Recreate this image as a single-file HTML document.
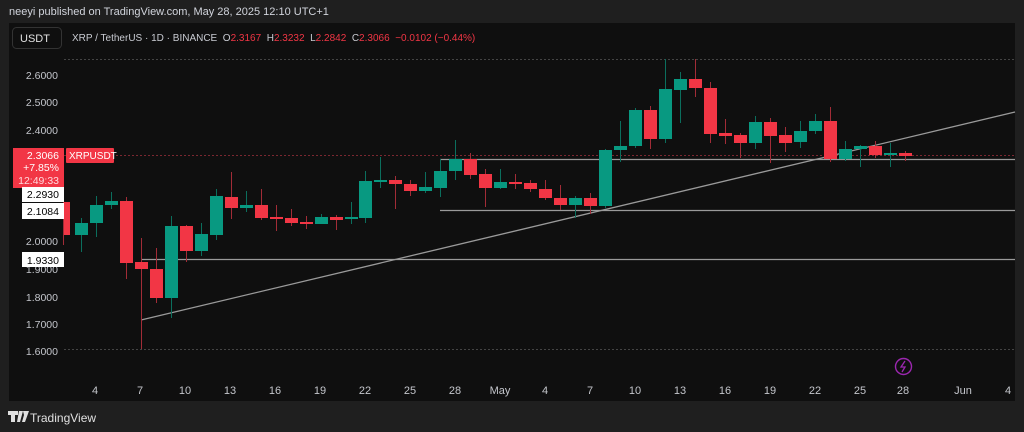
<!DOCTYPE html><html><head><style>
body{margin:0;width:1024px;height:432px;background:#1f1f1f;overflow:hidden;font-family:"Liberation Sans",sans-serif;position:relative}
.t{position:absolute;white-space:nowrap}
</style></head><body>
<div class="t" style="left:9px;top:6px;font-size:11px;color:#d1d4dc">neeyi published on TradingView.com, May 28, 2025 12:10 UTC+1</div>
<svg style="position:absolute;left:0;top:0" width="1024" height="432" font-family="Liberation Sans, sans-serif">
<rect x="9" y="23" width="1006" height="378" fill="#0f0f0f"/>
<g stroke="#444" stroke-dasharray="2,2" stroke-width="1"><line x1="64" y1="59.5" x2="1015" y2="59.5"/><line x1="64" y1="349.5" x2="1015" y2="349.5"/></g>
<line x1="64" y1="155.5" x2="1015" y2="155.5" stroke="#7a2730" stroke-dasharray="2,2"/>
<g stroke="#9a9a9a" stroke-width="1.3"><line x1="440" y1="159.5" x2="1015" y2="159.5"/><line x1="440" y1="210.5" x2="1015" y2="210.5"/><line x1="141" y1="259.5" x2="1015" y2="259.5"/><line x1="141" y1="320" x2="1015" y2="112"/></g>
<g id="c"></g>
<rect x="12.5" y="27.5" width="49" height="21" rx="4" fill="#0f0f0f" stroke="#333"/>
<text x="20" y="42" font-size="11" fill="#e0e0e0">USDT</text>
<text x="72" y="41" font-size="10" fill="#c9cbd2" style="white-space:pre">XRP / TetherUS · 1D · BINANCE  O<tspan fill="#f23645">2.3167</tspan>  H<tspan fill="#f23645">2.3232</tspan>  L<tspan fill="#f23645">2.2842</tspan>  C<tspan fill="#f23645">2.3066</tspan>  <tspan fill="#f23645">−0.0102 (−0.44%)</tspan></text>
<g font-size="10.5" fill="#c4c6cc" text-anchor="end">
<text x="58" y="79">2.6000</text><text x="58" y="106">2.5000</text><text x="58" y="134">2.4000</text><text x="58" y="245">2.0000</text><text x="58" y="273">1.9000</text><text x="58" y="301">1.8000</text><text x="58" y="328">1.7000</text><text x="58" y="355">1.6000</text></g>
<rect x="13" y="148" width="51" height="40" fill="#f23645"/>
<g font-size="10.5" fill="#fff" text-anchor="end"><text x="59" y="159">2.3066</text><text x="59" y="171">+7.85%</text><text x="59" y="184" fill="#ffd8dc">12:49:33</text></g>
<rect x="66" y="148" width="48" height="15" rx="1" fill="#f23645"/><text x="69" y="159" font-size="10" fill="#fff">XRPUSDT</text>
<g fill="#fff"><rect x="22" y="187" width="42" height="15"/><rect x="22" y="203" width="42" height="16"/><rect x="22" y="252" width="42" height="15"/></g>
<g font-size="10.5" fill="#000" text-anchor="end"><text x="59" y="198">2.2930</text><text x="59" y="215">2.1084</text><text x="59" y="264">1.9330</text></g>
<g font-size="11" fill="#c4c6cc" text-anchor="middle">
<text x="95" y="394">4</text><text x="140" y="394">7</text><text x="185" y="394">10</text><text x="230" y="394">13</text><text x="275" y="394">16</text><text x="320" y="394">19</text><text x="365" y="394">22</text><text x="410" y="394">25</text><text x="455" y="394">28</text><text x="500" y="394">May</text><text x="545" y="394">4</text><text x="590" y="394">7</text><text x="635" y="394">10</text><text x="680" y="394">13</text><text x="725" y="394">16</text><text x="770" y="394">19</text><text x="815" y="394">22</text><text x="860" y="394">25</text><text x="903" y="394">28</text><text x="963" y="394">Jun</text><text x="1008" y="394">4</text></g>
<circle cx="903.5" cy="366.5" r="8" fill="none" stroke="#9c27b0" stroke-width="1.4"/>
<path d="M905 361 L901 367 L905 367 L902 372" fill="none" stroke="#9c27b0" stroke-width="1.3"/>
<path d="M8 411h10v4h-3v7h-4v-7h-3z M19 411h4l-3 11h-3z M23 411h6l-4 11h-3l2-7z" fill="#e0e0e0"/>
<text x="30" y="422" font-size="12" fill="#e0e0e0">TradingView</text>
</svg>
<script>
var d=[[63,202,235,176,245,'r'],[81,223,235,218,252,'g'],[96,205,223,196,237,'g'],[111,201,205,192,209,'g'],[126,201,263,197,279,'r'],[141,262,269,238,349,'r'],[156,269,298,248,303,'r'],[171,226,298,216,318,'g'],[186,226,251,225,262,'r'],[201,234,251,223,256,'g'],[216,196,235,189,240,'g'],[231,197,208,172,219,'r'],[246,205,208,191,212,'g'],[261,205,218,189,220,'r'],[276,217,218,205,231,'r'],[291,218,223,209,226,'r'],[306,222,224,216,229,'r'],[321,217,224,214,224,'g'],[336,217,220,215,230,'r'],[351,217,219,202,224,'g'],[365,181,218,171,223,'g'],[380,180,182,157,188,'g'],[395,180,184,176,209,'r'],[410,184,191,180,196,'r'],[425,187,191,172,193,'g'],[440,171,188,159,197,'g'],[455,159,171,140,180,'g'],[470,159,175,153,179,'r'],[485,174,188,169,207,'r'],[500,182,188,169,189,'g'],[515,182,183,174,189,'r'],[530,183,189,180,192,'r'],[545,189,198,180,200,'r'],[560,198,205,185,210,'r'],[575,198,205,196,218,'g'],[590,198,206,193,214,'r'],[605,150,206,149,208,'g'],[620,146,150,121,162,'g'],[635,110,146,108,148,'g'],[650,110,139,106,149,'r'],[665,89,139,59,143,'g'],[680,79,90,72,123,'g'],[695,79,88,59,97,'r'],[710,88,134,82,143,'r'],[725,133,136,119,144,'r'],[740,135,143,133,158,'r'],[755,122,143,116,149,'g'],[770,122,136,118,163,'r'],[785,135,143,127,152,'r'],[800,131,142,121,148,'g'],[815,121,131,114,134,'g'],[830,121,159,107,162,'r'],[845,149,159,141,161,'g'],[860,146,149,145,167,'g'],[875,146,155,141,158,'r'],[890,153,155,143,167,'g'],[905,153,156,151,161,'r']];
var s='';d.forEach(function(c){var col=c[5]=='r'?'#f23645':'#089981',w=c[5]=='r'?'#a22c37':'#0b6e5d';var x=c[0],l=Math.max(64,x-6);
s+='<line x1="'+(x+.5)+'" y1="'+c[3]+'" x2="'+(x+.5)+'" y2="'+c[4]+'" stroke="'+w+'"/>';
s+='<rect x="'+l+'" y="'+c[1]+'" width="'+(x+7-l)+'" height="'+Math.max(2,c[2]-c[1])+'" fill="'+col+'"/>';});
document.getElementById('c').innerHTML=s;
</script>
</body></html>
